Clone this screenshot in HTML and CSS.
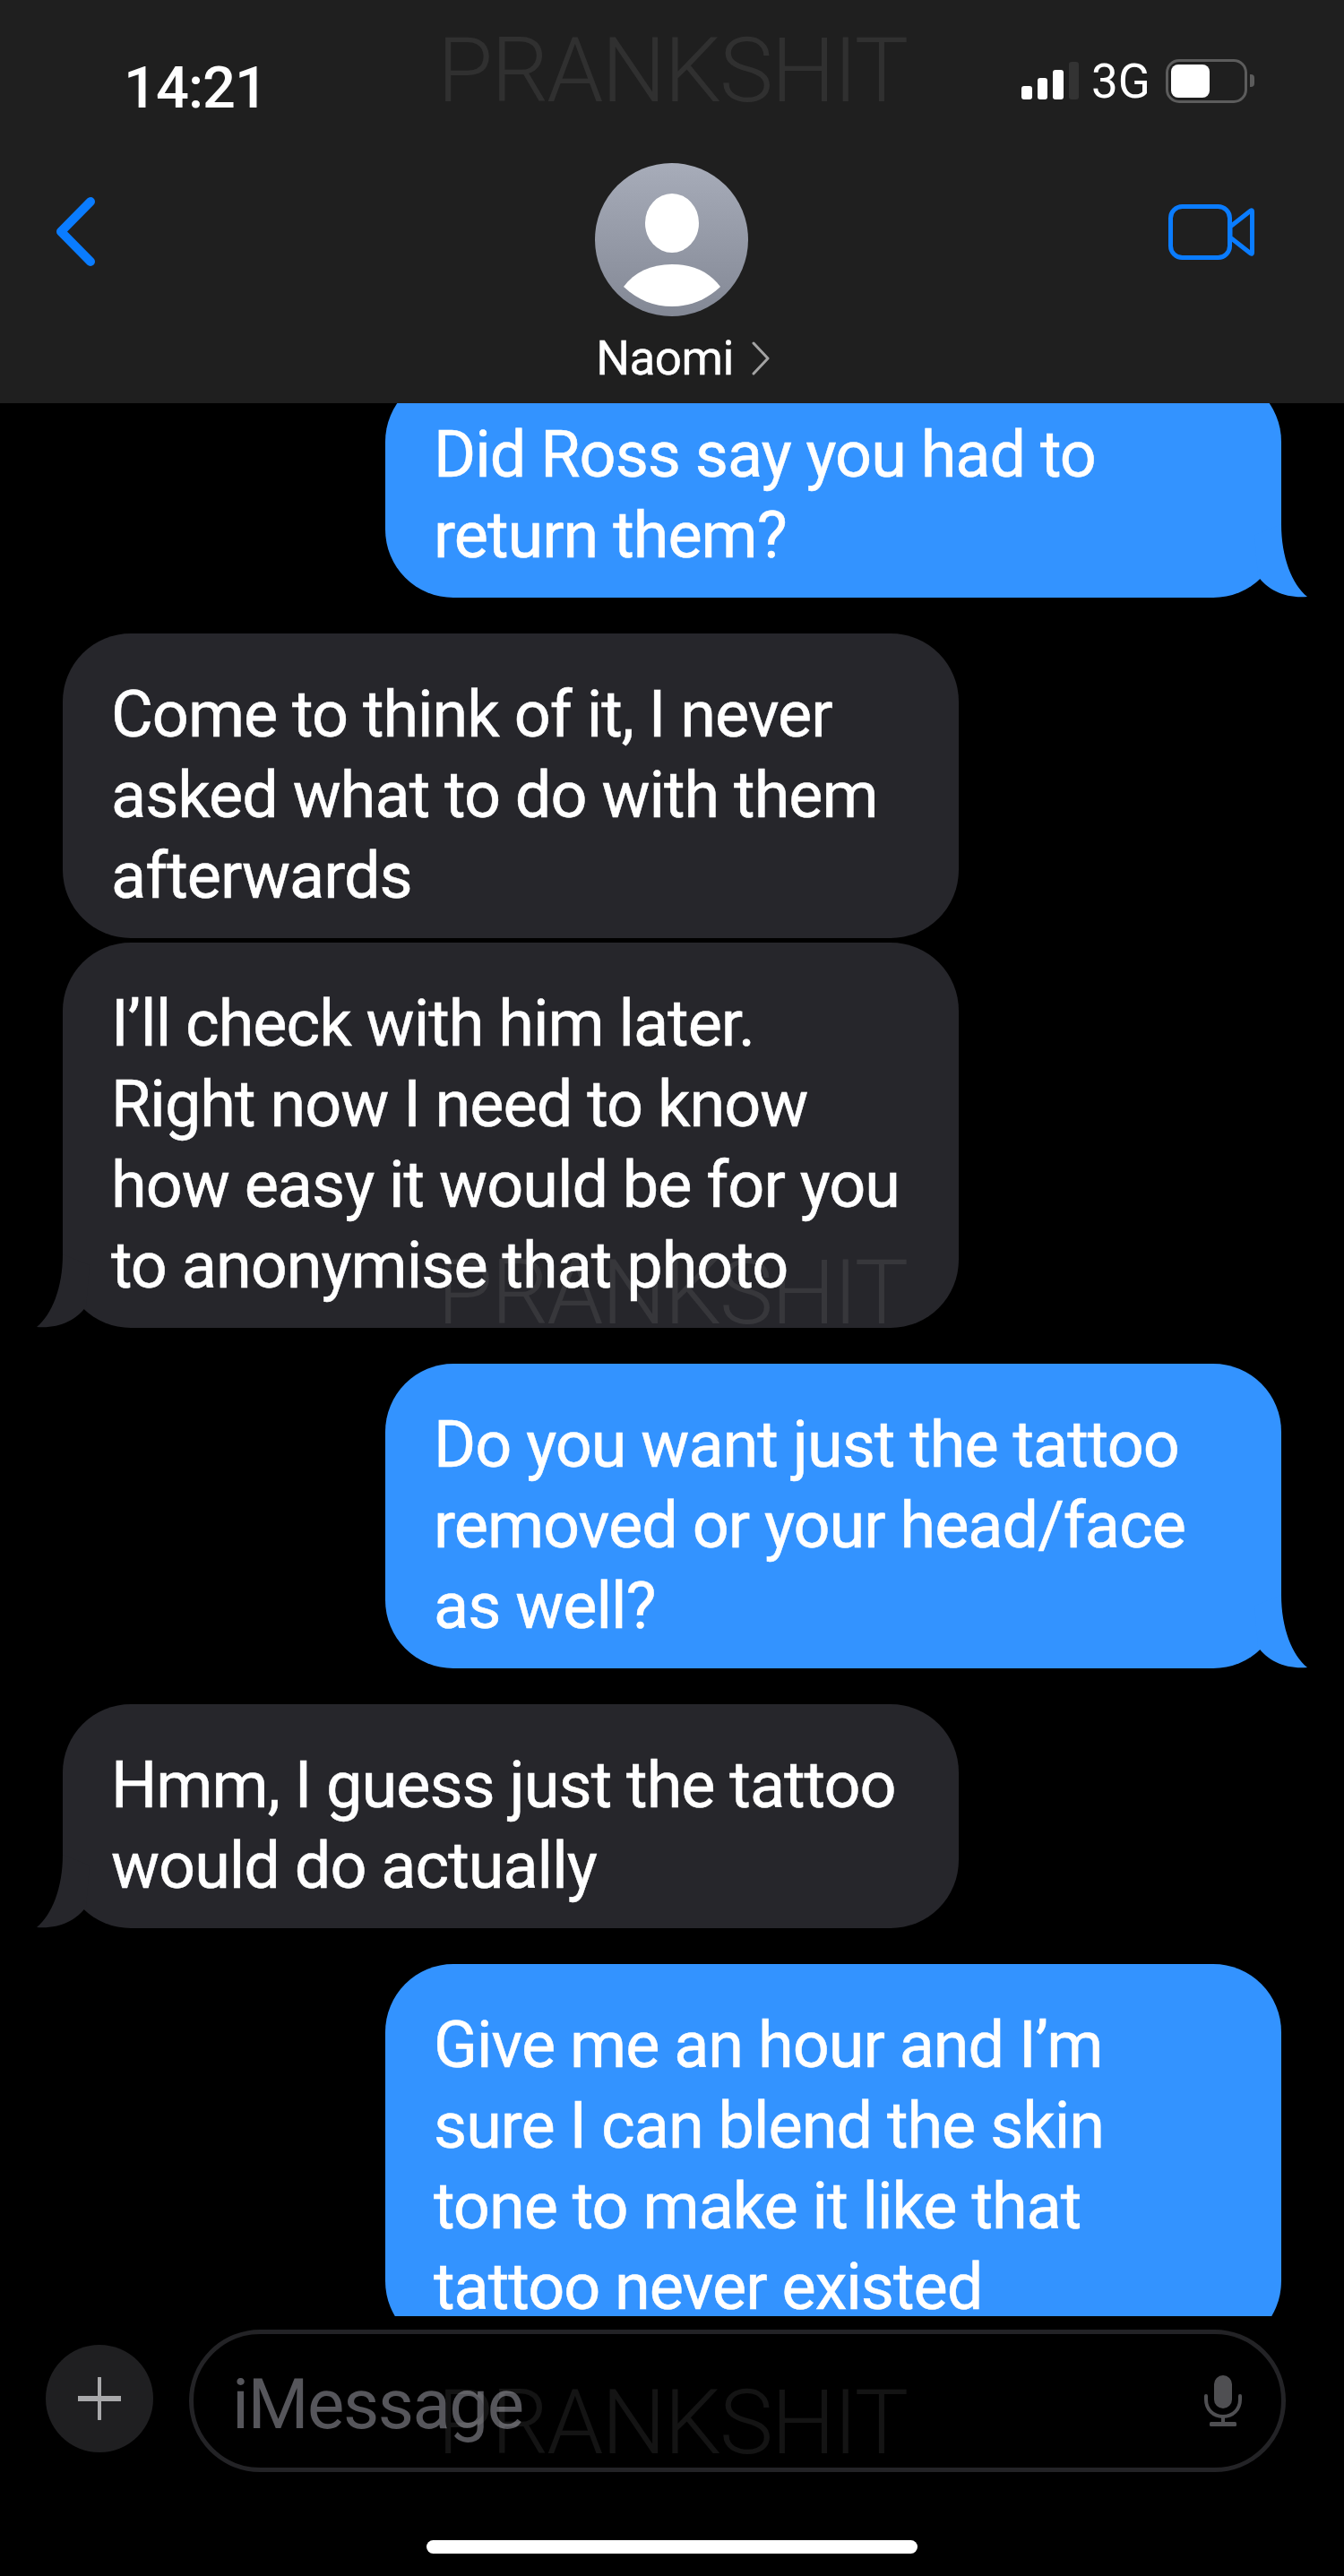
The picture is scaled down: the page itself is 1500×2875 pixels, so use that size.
FILE: index.html
```html
<!DOCTYPE html>
<html lang="en">
  <head>
    <meta charset="UTF-8" />
    <meta name="viewport" content="width=device-width, initial-scale=1.0" />
    <title>Naomi</title>
    <link rel="stylesheet" href="styles.css">
  </head>
  <body>
    <header class="top">
      <div class="status">
        <span class="time">14:21</span>
        <div class="signal">
          <i class="bar bar1"></i>
          <i class="bar bar2"></i>
          <i class="bar bar3"></i>
          <i class="bar bar4"></i>
        </div>
        <span class="network">3G</span>
        <div class="battery"><i class="battery-fill"></i></div>
        <i class="battery-nub"></i>
      </div>
      <div class="nav">
        <svg class="back" viewBox="0 0 44 77" width="44" height="77">
          <path d="M39 5 L6 38.5 L39 72" fill="none" stroke="#0a7cff" stroke-width="10" stroke-linecap="round" stroke-linejoin="round" />
        </svg>
        <div class="contact">
          <svg class="avatar" viewBox="0 0 171 171" width="171" height="171">
            <defs>
              <linearGradient id="avatar-bg" x1="0" y1="0" x2="0" y2="1">
                <stop offset="0" stop-color="#a7acb9" />
                <stop offset="1" stop-color="#838895" />
              </linearGradient>
            </defs>
            <circle cx="85.5" cy="85.5" r="85.5" fill="url(#avatar-bg)" />
            <ellipse cx="86" cy="67" rx="30" ry="33" fill="#fff" />
            <path d="M32 138 C44 122 62 113 86 113 C110 113 128 122 140 138 C124 153 106 160 86 160 C66 160 48 153 32 138 Z" fill="#fff" />
          </svg>
          <div class="name-row">
            <span class="name">Naomi</span>
            <svg viewBox="0 0 20 38" width="20" height="38">
              <path d="M2 2 L18 19 L2 36" fill="none" stroke="#a3a3a3" stroke-width="3" stroke-linecap="round" stroke-linejoin="round" />
            </svg>
          </div>
        </div>
        <svg class="video" viewBox="0 0 96 62" width="96" height="62">
          <rect x="2.5" y="2.5" width="66" height="57" rx="13" fill="none" stroke="#0a7cff" stroke-width="5" />
          <path d="M69 25 L92 7 Q93.500 6 93.500 8 L93.500 54 Q93.500 56 92 55 L69 37 Z" fill="none" stroke="#0a7cff" stroke-width="5" stroke-linejoin="round" />
        </svg>
      </div>
    </header>

    <main class="thread">
      <div class="bubble sent first">
        Did Ross say you had to<br />return them?
        <svg class="tail" viewBox="0 0 70 90" width="70" height="90"><path d="M30 8 C30 45 18 75 1 89 C25 91 45 82 56 66 L60 20 Z" /></svg>
      </div>
      <div class="bubble received">
        Come to think of it, I never<br />asked what to do with them<br />afterwards
      </div>
      <div class="bubble received joined">
        I’ll check with him later.<br />Right now I need to know<br />how easy it would be for you<br />to anonymise that photo
        <svg class="tail" viewBox="0 0 70 90" width="70" height="90"><path d="M30 8 C30 45 18 75 1 89 C25 91 45 82 56 66 L60 20 Z" /></svg>
      </div>
      <div class="bubble sent">
        Do you want just the tattoo<br />removed or your head/face<br />as well?
        <svg class="tail" viewBox="0 0 70 90" width="70" height="90"><path d="M30 8 C30 45 18 75 1 89 C25 91 45 82 56 66 L60 20 Z" /></svg>
      </div>
      <div class="bubble received">
        Hmm, I guess just the tattoo<br />would do actually
        <svg class="tail" viewBox="0 0 70 90" width="70" height="90"><path d="M30 8 C30 45 18 75 1 89 C25 91 45 82 56 66 L60 20 Z" /></svg>
      </div>
      <div class="bubble sent">
        Give me an hour and I’m<br />sure I can blend the skin<br />tone to make it like that<br />tattoo never existed
      </div>
    </main>

    <footer class="composer">
      <div class="plus">
        <svg viewBox="0 0 48 48" width="48" height="48">
          <path d="M24 1 V47" stroke="#a9a9ab" stroke-width="4" stroke-linecap="round" />
          <path d="M1 24 H47" stroke="#a9a9ab" stroke-width="6" stroke-linecap="round" />
        </svg>
      </div>
      <div class="input">
        <span class="placeholder">iMessage</span>
        <svg class="mic" viewBox="0 0 42 57" width="42" height="57">
          <rect x="11" y="0" width="20" height="37" rx="10" fill="#4f4f52" />
          <path d="M2 23 V27 C2 38 10 46 21 46 C32 46 40 38 40 27 V23" fill="none" stroke="#4f4f52" stroke-width="4" stroke-linecap="round" />
          <path d="M21 46 V54" stroke="#4f4f52" stroke-width="4" />
          <rect x="6" y="52" width="30" height="5" rx="1.500" fill="#4f4f52" />
        </svg>
      </div>
    </footer>
    <div class="home-bar"></div>

    <!-- watermark sits on top of everything -->
    <span class="mark mark-top">PRANKSHIT</span>
    <span class="mark mark-mid">PRANKSHIT</span>
    <span class="mark mark-low">PRANKSHIT</span>
  </body>
</html>
```

FILE: styles.css
```css
* {
  box-sizing: border-box;
}

body {
  position: relative;
  margin: 0;
  width: 1500px;
  height: 2875px;
  overflow: hidden;
  background-color: #000000;
  color: #ffffff;
  font-family: Roboto, "Liberation Sans", sans-serif;
  display: flex;
  flex-direction: column;
}

.top {
  height: 450px;
  flex: none;
  background-color: #1f1f1f;
}

.status {
  height: 182px;
  padding: 62px 0 0 138px;
  display: flex;
  align-items: flex-start;
}

.time {
  width: 1002px;
  font-size: 65px;
  font-weight: 500;
  line-height: 72px;
  letter-spacing: -1px;
}

.signal {
  height: 42px;
  margin-top: 7px;
  display: flex;
  align-items: flex-end;
  gap: 6px;
}

.bar {
  display: block;
  width: 11.5px;
  border-radius: 3px;
  background-color: #ffffff;
}

.bar1 { height: 15px; }
.bar2 { height: 24px; }
.bar3 { height: 33px; }
.bar4 { height: 42px; background-color: #333333; }

.network {
  margin-left: 14px;
  font-size: 53px;
  line-height: 60px;
  margin-top: -1px;
}

.battery {
  width: 91px;
  height: 49px;
  margin-left: 17px;
  margin-top: 4px;
  padding: 3px;
  border: 3px solid #5c5c5c;
  border-radius: 15px;
}

.battery-fill {
  display: block;
  width: 43px;
  height: 37px;
  border-radius: 8px;
  background-color: #ffffff;
}

.battery-nub {
  width: 5px;
  height: 14px;
  margin-left: 3px;
  margin-top: 21px;
  border-radius: 0 4px 4px 0;
  background-color: #5c5c5c;
}

.nav {
  height: 268px;
  padding: 0 100px 0 62px;
  display: grid;
  grid-template-columns: 602px 171px 1fr;
  align-items: start;
}

.back {
  margin-top: 38px;
}

.video {
  margin-top: 46px;
  justify-self: end;
}

.contact {
  width: 171px;
  display: flex;
  flex-direction: column;
  align-items: center;
}

.avatar {
  display: block;
}

.name-row {
  margin-top: 12px;
  padding-left: 25px;
  display: flex;
  align-items: center;
  gap: 20px;
  flex: none;
}

.name {
  font-size: 53px;
  line-height: 70px;
  letter-spacing: -0.5px;
  -webkit-text-stroke: 0.4px #ffffff;
}

.thread {
  height: 2135px;
  flex: none;
  overflow: hidden;
  display: flex;
  flex-direction: column;
  align-items: flex-start;
}

.bubble {
  position: relative;
  flex: none;
  width: 1000px;
  padding: 46px 54px 24px;
  border-radius: 76px;
  font-size: 72px;
  line-height: 90px;
  letter-spacing: -1px;
  white-space: nowrap;
  -webkit-text-stroke: 0.5px #ffffff;
}

.sent {
  align-self: flex-end;
  margin: 40px 70px 0 0;
  background-color: #3393ff;
  fill: #3393ff;
}

.first {
  margin-top: -33px;
}

.received {
  margin: 40px 0 0 70px;
  background-color: #26262b;
  fill: #26262b;
}

.joined {
  margin-top: 5px;
}

.tail {
  position: absolute;
  bottom: 0;
  display: block;
}

.received .tail {
  left: -30px;
}

.sent .tail {
  right: -30px;
  transform: scaleX(-1);
}

.composer {
  height: 250px;
  flex: none;
  padding: 15px 65px 0 51px;
  display: flex;
  align-items: flex-start;
  gap: 40px;
}

.plus {
  width: 120px;
  height: 120px;
  margin-top: 17px;
  flex: none;
  border-radius: 50%;
  background-color: #1f1f21;
  display: flex;
  align-items: center;
  justify-content: center;
}

.input {
  height: 159px;
  flex: 1;
  padding: 0 44px 0 43px;
  border: 5px solid #232326;
  border-radius: 80px;
  display: flex;
  align-items: center;
  justify-content: space-between;
}

.placeholder {
  margin-top: 8px;
  font-size: 78px;
  letter-spacing: -1.5px;
  color: #56565b;
}

.home-bar {
  width: 548px;
  height: 15px;
  margin: 0 auto;
  flex: none;
  border-radius: 8px;
  background-color: #ffffff;
}

.mark {
  position: absolute;
  left: 488px;
  font-size: 101px;
  font-weight: 300;
  line-height: 100px;
  letter-spacing: -2px;
  color: rgba(255, 255, 255, 0.08);
}

.mark-top { top: 29px; }
.mark-mid { top: 1393px; }
.mark-low { top: 2654px; }
```
